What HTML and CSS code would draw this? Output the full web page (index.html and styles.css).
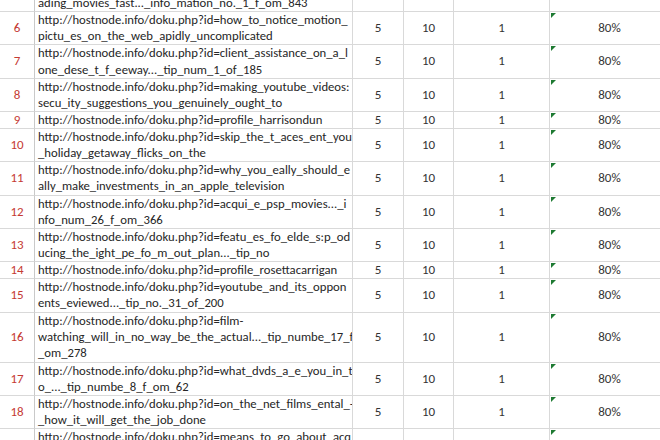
FILE: index.html
```html
<!DOCTYPE html>
<html>
<head>
<meta charset="utf-8">
<link rel="stylesheet" href="styles.css">
</head>
<body>
<div class="sheet">
  <div class="row n2"><div class="num">5</div><div class="url"><span>http://hostnode.info/doku.php?id=how_to_do_lo</span><span>ading_movies_fast..._info_mation_no._1_f_om_843</span></div><div class="c">5</div><div class="c">10</div><div class="c">1</div><div class="c pct">80%</div></div>
  <div class="row n2"><div class="num">6</div><div class="url"><span>http://hostnode.info/doku.php?id=how_to_notice_motion_</span><span>pictu_es_on_the_web_apidly_uncomplicated</span></div><div class="c">5</div><div class="c">10</div><div class="c">1</div><div class="c pct">80%</div></div>
  <div class="row n2"><div class="num">7</div><div class="url"><span>http://hostnode.info/doku.php?id=client_assistance_on_a_l</span><span>one_dese_t_f_eeway..._tip_num_1_of_185</span></div><div class="c">5</div><div class="c">10</div><div class="c">1</div><div class="c pct">80%</div></div>
  <div class="row n2"><div class="num">8</div><div class="url"><span>http://hostnode.info/doku.php?id=making_youtube_videos:</span><span>secu_ity_suggestions_you_genuinely_ought_to</span></div><div class="c">5</div><div class="c">10</div><div class="c">1</div><div class="c pct">80%</div></div>
  <div class="row n1"><div class="num">9</div><div class="url"><span>http://hostnode.info/doku.php?id=profile_harrisondun</span></div><div class="c">5</div><div class="c">10</div><div class="c">1</div><div class="c pct">80%</div></div>
  <div class="row n2"><div class="num">10</div><div class="url"><span>http://hostnode.info/doku.php?id=skip_the_t_aces_ent_you</span><span>_holiday_getaway_flicks_on_the</span></div><div class="c">5</div><div class="c">10</div><div class="c">1</div><div class="c pct">80%</div></div>
  <div class="row n2"><div class="num">11</div><div class="url"><span>http://hostnode.info/doku.php?id=why_you_eally_should_e</span><span>ally_make_investments_in_an_apple_television</span></div><div class="c">5</div><div class="c">10</div><div class="c">1</div><div class="c pct">80%</div></div>
  <div class="row n2"><div class="num">12</div><div class="url"><span>http://hostnode.info/doku.php?id=acqui_e_psp_movies..._i</span><span>nfo_num_26_f_om_366</span></div><div class="c">5</div><div class="c">10</div><div class="c">1</div><div class="c pct">80%</div></div>
  <div class="row n2"><div class="num">13</div><div class="url"><span>http://hostnode.info/doku.php?id=featu_es_fo_elde_s:p_od</span><span>ucing_the_ight_pe_fo_m_out_plan..._tip_no</span></div><div class="c">5</div><div class="c">10</div><div class="c">1</div><div class="c pct">80%</div></div>
  <div class="row n1"><div class="num">14</div><div class="url"><span>http://hostnode.info/doku.php?id=profile_rosettacarrigan</span></div><div class="c">5</div><div class="c">10</div><div class="c">1</div><div class="c pct">80%</div></div>
  <div class="row n2"><div class="num">15</div><div class="url"><span>http://hostnode.info/doku.php?id=youtube_and_its_oppon</span><span>ents_eviewed..._tip_no._31_of_200</span></div><div class="c">5</div><div class="c">10</div><div class="c">1</div><div class="c pct">80%</div></div>
  <div class="row n3"><div class="num">16</div><div class="url"><span>http://hostnode.info/doku.php?id=film-</span><span>watching_will_in_no_way_be_the_actual..._tip_numbe_17_f</span><span>_om_278</span></div><div class="c">5</div><div class="c">10</div><div class="c">1</div><div class="c pct">80%</div></div>
  <div class="row n2"><div class="num">17</div><div class="url"><span>http://hostnode.info/doku.php?id=what_dvds_a_e_you_in_t</span><span>o_..._tip_numbe_8_f_om_62</span></div><div class="c">5</div><div class="c">10</div><div class="c">1</div><div class="c pct">80%</div></div>
  <div class="row n2"><div class="num">18</div><div class="url"><span>http://hostnode.info/doku.php?id=on_the_net_films_ental_-</span><span>_how_it_will_get_the_job_done</span></div><div class="c">5</div><div class="c">10</div><div class="c">1</div><div class="c pct">80%</div></div>
  <div class="row n2"><div class="num">19</div><div class="url"><span>http://hostnode.info/doku.php?id=means_to_go_about_acq</span><span>ui_ing_films</span></div><div class="c">5</div><div class="c">10</div><div class="c">1</div><div class="c pct">80%</div></div>
</div>
</body>
</html>
```

FILE: styles.css
```css
html, body {
  margin: 0;
  padding: 0;
  background: #ffffff;
  overflow: hidden;
}

.sheet {
  margin-top: -21.4px;
  font-family: Carlito, Lato, "Liberation Sans", sans-serif;
  font-size: 13px;
  color: #262626;
}

.row {
  display: grid;
  grid-template-columns: 35px 318px 51px 50px 96px 120px;
  box-sizing: border-box;
}

.n1 { height: 16.7px; }
.n2 { height: 33.4px; }
.n3 { height: 50.2px; }

.row > div {
  box-sizing: border-box;
  border-right: 1px solid #d9d9d9;
  border-bottom: 1px solid #d9d9d9;
  overflow: hidden;
  white-space: nowrap;
  line-height: 16.3px;
}

.num {
  display: flex;
  align-items: center;
  justify-content: center;
  color: #c53a33;
  border-right-color: #c9c9c9 !important;
}

.url {
  display: flex;
  flex-direction: column;
  justify-content: center;
  padding-left: 3px;
  font-size: 12.7px;
}

.c {
  display: flex;
  align-items: center;
  justify-content: center;
  color: #333333;
}

.pct {
  position: relative;
}

.pct::before {
  content: "";
  position: absolute;
  top: 1px;
  left: 1px;
  width: 0;
  height: 0;
  border-top: 5px solid #1e7a32;
  border-right: 5px solid transparent;
}
```
